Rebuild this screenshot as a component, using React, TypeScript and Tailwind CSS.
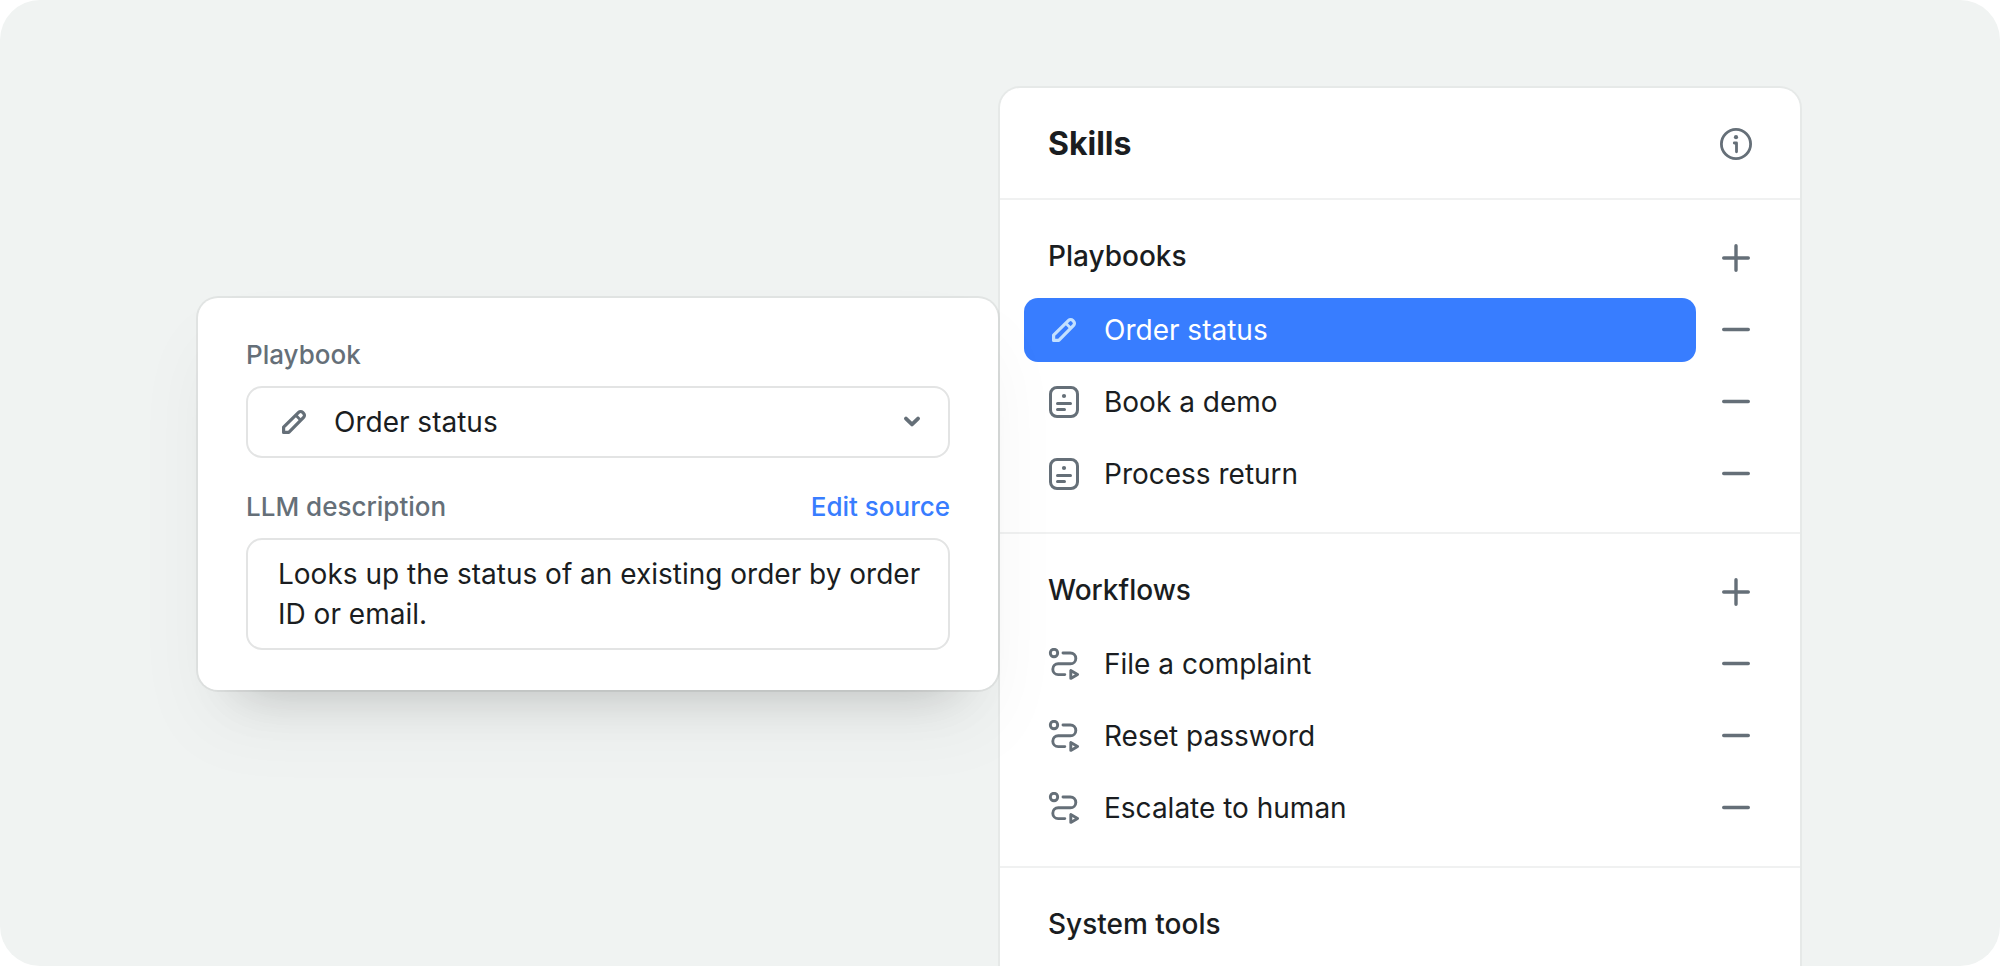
import React from "react";

const regular = "text-[28px] leading-10 text-[#1a1d21]";

function PencilIcon({ className }: { className?: string }) {
  return (
    <svg viewBox="0 0 32 32" className={className} fill="none" stroke="currentColor" strokeWidth="3.2" strokeLinejoin="round" aria-hidden="true">
      <path d="M5.6 26.4v-5.2L20.6 6.4a2.9 2.9 0 0 1 4.1 0l.9.9a2.9 2.9 0 0 1 0 4.1L10.8 26.4z" />
      <path d="M17.6 9l5.4 5.4" strokeWidth="2.8" />
    </svg>
  );
}

function PlaybookIcon({ className }: { className?: string }) {
  return (
    <svg viewBox="0 0 32 32" className={className} fill="none" stroke="currentColor" strokeWidth="3" strokeLinecap="round" aria-hidden="true">
      <rect x="2.5" y="1.5" width="27" height="29" rx="6.5" />
      <circle cx="16" cy="10" r="2.1" fill="currentColor" stroke="none" />
      <path d="M9.5 17.5h13M9.5 23.5h7" />
    </svg>
  );
}

function WorkflowIcon({ className }: { className?: string }) {
  return (
    <svg viewBox="0 0 32 32" className={className} fill="none" stroke="currentColor" strokeWidth="2.9" strokeLinecap="round" strokeLinejoin="round" aria-hidden="true">
      <circle cx="6" cy="5" r="3.7" />
      <path d="M15 5h7.4a5.4 5.4 0 0 1 0 10.8H10.2a5.4 5.4 0 0 0 0 10.8h6.6" />
      <path d="M22.8 22.6v7.8l6.8-3.9z" />
    </svg>
  );
}

function InfoIcon() {
  return (
    <svg viewBox="0 0 32 32" className="size-8" fill="none" stroke="currentColor" strokeLinecap="round" strokeLinejoin="round" aria-hidden="true">
      <circle cx="16" cy="16" r="14.6" strokeWidth="2.8" />
      <circle cx="16" cy="9.2" r="2.1" fill="currentColor" stroke="none" />
      <path d="M14.3 15h2.2v8.8" strokeWidth="2.8" />
    </svg>
  );
}

function PlusIcon() {
  return (
    <svg viewBox="0 0 32 32" className="size-8" fill="none" stroke="currentColor" strokeWidth="3.4" strokeLinecap="round" aria-hidden="true">
      <path d="M16 3.7v24.6M3.7 16h24.6" />
    </svg>
  );
}

function MinusIcon() {
  return (
    <svg viewBox="0 0 32 32" className="size-8" fill="none" stroke="currentColor" strokeWidth="3.4" strokeLinecap="round" aria-hidden="true">
      <path d="M3.7 15.5h24.6" />
    </svg>
  );
}

function ChevronIcon({ className }: { className?: string }) {
  return (
    <svg viewBox="0 0 16 16" className={className} fill="none" stroke="currentColor" strokeWidth="3.8" strokeLinecap="round" strokeLinejoin="round" aria-hidden="true">
      <path d="M2 4.6 8 10.4l6-5.8" />
    </svg>
  );
}

type Skill = { name: string; icon: React.ComponentType<{ className?: string }>; selected?: boolean };

const playbooks: Skill[] = [
  { name: "Order status", icon: PencilIcon, selected: true },
  { name: "Book a demo", icon: PlaybookIcon },
  { name: "Process return", icon: PlaybookIcon },
];

const workflows: Skill[] = [
  { name: "File a complaint", icon: WorkflowIcon },
  { name: "Reset password", icon: WorkflowIcon },
  { name: "Escalate to human", icon: WorkflowIcon },
];

function SkillRow({ name, icon: Icon, selected }: Skill) {
  return (
    <li className="flex items-center gap-6">
      <button
        type="button"
        className={
          selected
            ? "flex h-16 flex-1 items-center gap-6 rounded-[14px] bg-[#387dff] px-6 text-left text-[28px] leading-10 text-white"
            : "flex h-16 flex-1 items-center gap-6 rounded-[14px] px-6 text-left text-[28px] leading-10 text-[#1a1d21]"
        }
      >
        <Icon className={selected ? "size-8 shrink-0 text-[#c3e0ff]" : "size-8 shrink-0 text-[#656f78]"} />
        {name}
      </button>
      <button type="button" aria-label={`Remove ${name}`} className="text-[#656f78]">
        <MinusIcon />
      </button>
    </li>
  );
}

function Section({ title, skills }: { title: string; skills: Skill[] }) {
  return (
    <section className="border-b-2 border-[#f0f1f1] pb-[26px]">
      <div className="flex items-start justify-between px-12 pt-[38px] pb-5">
        <h3 className="text-[28px] leading-9 font-medium">{title}</h3>
        <button type="button" aria-label={`Add to ${title}`} className="flex h-10 items-center text-[#656f78]">
          <PlusIcon />
        </button>
      </div>
      <ul className="flex flex-col gap-2 pr-12 pl-6">
        {skills.map((skill) => (
          <SkillRow key={skill.name} {...skill} />
        ))}
      </ul>
    </section>
  );
}

export default function App() {
  return (
    <div className="bg-white font-['Inter',sans-serif] text-[#1a1d21]">
      <main className="flex min-h-screen justify-center gap-0.5 overflow-hidden rounded-[40px] bg-[#f0f3f2] pr-0.5">
        <form className="relative z-10 mt-[298px] flex max-w-[800px] flex-1 flex-col gap-8 self-start rounded-[20px] bg-white px-12 py-10 shadow-[0_0_0_2px_rgba(0,0,0,0.06),0_44px_48px_-44px_rgba(0,0,0,0.2),0_40px_80px_-8px_rgba(0,0,0,0.05)]">
          <div className="flex flex-col gap-[14px]">
            <label htmlFor="playbook" className="text-[26px] leading-[34px] font-medium text-[#656f78]">
              Playbook
            </label>
            <div className="relative">
              <PencilIcon className="pointer-events-none absolute top-5 left-8 size-8 text-[#656f78]" />
              <select
                id="playbook"
                className={`block h-[72px] w-full appearance-none rounded-2xl border-2 border-[#e3e4e4] bg-white pr-20 pl-[86px] ${regular}`}
              >
                <option>Order status</option>
                <option>Book a demo</option>
                <option>Process return</option>
              </select>
              <ChevronIcon className="pointer-events-none absolute top-7 right-[30px] size-4 text-[#656f78]" />
            </div>
          </div>
          <div className="flex flex-col gap-[14px]">
            <div className="flex justify-between text-[26px] leading-[34px] font-medium">
              <label htmlFor="description" className="text-[#656f78]">
                LLM description
              </label>
              <a href="#source" className="text-[#387dff]">
                Edit source
              </a>
            </div>
            <textarea
              id="description"
              rows={2}
              defaultValue="Looks up the status of an existing order by order ID or email."
              className={`block w-full resize-none overflow-hidden rounded-2xl border-2 border-[#e3e4e4] bg-white py-[14px] pr-4 pl-[30px] ${regular}`}
            />
          </div>
        </form>
        <aside className="mt-[88px] max-w-[800px] flex-1 rounded-t-[20px] bg-white shadow-[0_0_0_2px_rgba(0,0,0,0.04)]">
          <header className="flex items-center justify-between border-b-2 border-[#f0f1f1] px-12 pt-9 pb-[34px]">
            <h2 className="text-[32px] leading-10 font-bold">Skills</h2>
            <button type="button" aria-label="About skills" className="text-[#656f78]">
              <InfoIcon />
            </button>
          </header>
          <Section title="Playbooks" skills={playbooks} />
          <Section title="Workflows" skills={workflows} />
          <section className="px-12 pt-[38px] pb-5">
            <h3 className="text-[28px] leading-9 font-medium">System tools</h3>
          </section>
        </aside>
      </main>
    </div>
  );
}
